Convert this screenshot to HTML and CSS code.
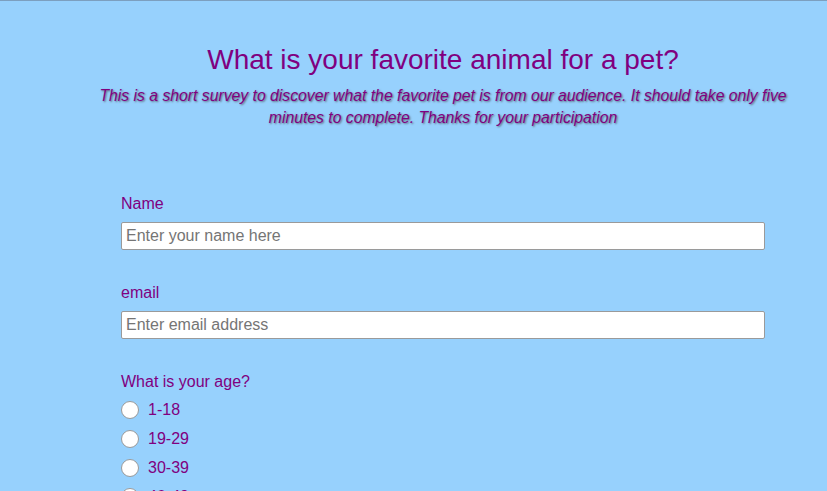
FILE: index.html
```html
<!DOCTYPE html>
<html lang="en">
<head>
<meta charset="utf-8">
<title>Survey</title>
<link rel="stylesheet" href="styles.css">
</head>
<body>
<main class="page">
  <header class="intro">
    <h1 class="title">What is your favorite animal for a pet?</h1>
    <p class="description">This is a short survey to discover what the favorite pet is from our audience. It should take only five minutes to complete. Thanks for your participation</p>
  </header>
  <form class="survey">
    <div class="field">
      <label class="label" for="name">Name</label>
      <input class="text-input" id="name" type="text" placeholder="Enter your name here">
    </div>
    <div class="field">
      <label class="label" for="email">email</label>
      <input class="text-input" id="email" type="email" placeholder="Enter email address">
    </div>
    <div class="field">
      <p class="label label-group">What is your age?</p>
      <label class="option"><input class="radio" type="radio" name="age"> <span>1-18</span></label>
      <label class="option"><input class="radio" type="radio" name="age"> <span>19-29</span></label>
      <label class="option"><input class="radio" type="radio" name="age"> <span>30-39</span></label>
      <label class="option"><input class="radio" type="radio" name="age"> <span>40-49</span></label>
    </div>
  </form>
</main>
</body>
</html>
```

FILE: styles.css
```css
html, body {
  margin: 0;
  padding: 0;
}
body {
  background: #97d1fd;
  border-top: 1px solid #7c9fbf;
  font-family: "Liberation Sans", Arial, sans-serif;
  color: #800080;
  height: 490px;
  overflow: hidden;
}
.page {
  width: 706px;
  margin-left: 90px;
}
.intro {
  text-align: center;
  padding-top: 43px;
}
.title {
  font-size: 28px;
  font-weight: normal;
  line-height: 32px;
  margin: 0;
}
.description {
  font-size: 15.75px;
  font-style: italic;
  line-height: 22px;
  margin: 9px 0 0;
  text-shadow: 1px 1px 2px #5a6a7a;
}
.survey {
  padding: 66px 31px 0;
}
.field {
  display: flex;
  flex-direction: column;
  margin-bottom: 34px;
}
.label {
  font-size: 16px;
  line-height: 18px;
  margin: 0 0 9px;
}
.label-group {
  margin-bottom: 4px;
}
.text-input {
  font-family: "Liberation Sans", Arial, sans-serif;
  font-size: 16px;
  line-height: 18px;
  height: 28px;
  box-sizing: border-box;
  padding: 4px 4px;
  border: 1px solid #9a9a9a;
  border-radius: 2px;
  background: #fff;
  color: #333;
  margin: 0;
}
.text-input::placeholder {
  color: #757575;
}
.option {
  display: flex;
  align-items: center;
  gap: 9px;
  font-size: 16px;
  height: 29px;
}
.radio {
  appearance: none;
  -webkit-appearance: none;
  width: 18px;
  height: 18px;
  margin: 0;
  border: 1px solid #9a9a9a;
  border-radius: 50%;
  background: #fff;
  box-sizing: border-box;
}
```
